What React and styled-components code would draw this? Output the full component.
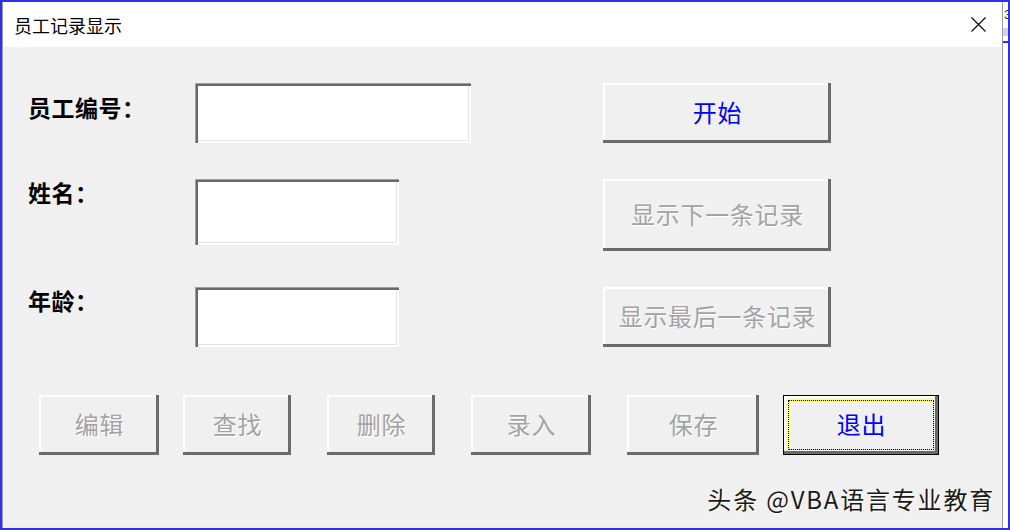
import React from "react";
import styled, { createGlobalStyle } from "styled-components";

const GlobalStyle = createGlobalStyle`
  html, body {
    margin: 0;
    padding: 0;
    background: #ffffff;
  }
`;

const CJK = `"Noto Sans CJK SC", "Liberation Sans", sans-serif`;

const Frame = styled.div`
  display: flex;
  width: 1010px;
  height: 530px;
  box-sizing: border-box;
  border: 2px solid #2f2ff2;
  overflow: hidden;
`;

const Dialog = styled.div`
  display: flex;
  flex-direction: column;
  width: 1001px;
  flex-shrink: 0;
  box-sizing: border-box;
  border-left: 1px solid #9c9c9c;
  border-right: 1px solid #9c9c9c;
`;

const TitleBar = styled.div`
  display: flex;
  align-items: center;
  height: 45px;
  flex-shrink: 0;
  background: #ffffff;
  padding-left: 11px;
`;

const Title = styled.span`
  flex: 1;
  font-family: ${CJK};
  font-size: 18px;
  color: #000;
`;

const Close = styled.svg`
  width: 15px;
  height: 15px;
  margin-right: 16px;
`;

const Body = styled.div`
  flex: 1;
  background: #f0f0f0;
  padding: 36px 0 0 25px;
`;

const Grid = styled.div`
  display: grid;
  grid-template-columns: 167px 408px 228px;
  row-gap: 36px;
`;

const Label = styled.div`
  font-family: ${CJK};
  font-weight: 700;
  font-size: 23px;
  line-height: 24px;
  letter-spacing: 0.5px;
  color: #000;
  margin-top: ${(p) => p.$top || 0}px;
`;

const TextBox = styled.input`
  display: block;
  width: ${(p) => p.$w}px;
  height: ${(p) => p.$h}px;
  box-sizing: border-box;
  border: none;
  outline: none;
  background: #ffffff;
  box-shadow: inset 1px 1px 0 #a0a0a0, inset 3px 3px 0 #696969,
    inset -2px -2px 0 #ffffff, inset -3px -3px 0 #e3e3e3;
`;

const Button = styled.button`
  position: relative;
  width: ${(p) => p.$w}px;
  height: ${(p) => p.$h || 60}px;
  margin-left: ${(p) => p.$ml || 0}px;
  padding: 0 0 3px 1px;
  box-sizing: border-box;
  background: #f0f0f0;
  border: ${(p) => (p.$default ? "1px solid #000" : "none")};
  box-shadow: inset -3px -3px 0 #6b6b6b, inset 2px 2px 0 #ffffff;
  font-family: ${CJK};
  font-size: 24px;
  line-height: 24px;
  letter-spacing: 0.7px;
  color: ${(p) => (p.$active ? "#0000ff" : "#a3a3a3")};
  text-shadow: ${(p) => (p.$active ? "none" : "1px 1px 0 #ffffff")};
  white-space: nowrap;
  cursor: default;

  &::before,
  &::after {
    content: "";
    display: ${(p) => (p.$default ? "block" : "none")};
    position: absolute;
    inset: 4px;
  }
  &::before {
    border: 1px solid #ffff00;
  }
  &::after {
    border: 1px dotted #000;
  }
`;

const ButtonRow = styled.div`
  display: flex;
  margin-top: 48px;
`;

const Footer = styled.div`
  display: flex;
  justify-content: flex-end;
  margin-top: 30px;
  padding-right: 7px;
`;

const Watermark = styled.span`
  font-family: ${CJK};
  font-size: 24px;
  line-height: 28px;
  letter-spacing: 1.8px;
  color: #1a1a1a;
  text-shadow: 1px 1px 0 #ffffff;
`;

const Strip = styled.div`
  flex: 1;
  display: flex;
  flex-direction: column;
  background: #ffffff;
`;

const StripDigit = styled.div`
  height: 26px;
  padding-left: 1px;
  font-family: "Liberation Sans", sans-serif;
  font-size: 13px;
  line-height: 26px;
  color: #333;
`;

const StripBand = styled.div`
  height: 8px;
  background: #d4d4d4;
`;

const StripLine = styled.div`
  height: 2px;
  margin-top: 5px;
  background: #2f2ff2;
`;

const rows = [
  { label: "员工编号：", top: 12, w: 276, h: 60, btn: "开始", bh: 60, active: true },
  { label: "姓名：", top: 1, w: 204, h: 66, btn: "显示下一条记录", bh: 72 },
  { label: "年龄：", top: 1, w: 204, h: 60, btn: "显示最后一条记录", bh: 60 },
];

const bottom = [
  { text: "编辑", w: 120, ml: 11 },
  { text: "查找", w: 108, ml: 24 },
  { text: "删除", w: 108, ml: 36 },
  { text: "录入", w: 120, ml: 36 },
  { text: "保存", w: 132, ml: 36 },
  { text: "退出", w: 156, ml: 24, active: true, def: true },
];

export default function App() {
  return (
    <>
      <GlobalStyle />
      <Frame>
        <Dialog>
          <TitleBar>
            <Title>员工记录显示</Title>
            <Close viewBox="0 0 15 15">
              <path d="M0.5 0.5 L14.5 14.5 M14.5 0.5 L0.5 14.5" stroke="#000" strokeWidth="1.1" fill="none" />
            </Close>
          </TitleBar>
          <Body>
            <Grid>
              {rows.map((r) => (
                <React.Fragment key={r.label}>
                  <Label $top={r.top}>{r.label}</Label>
                  <TextBox $w={r.w} $h={r.h} readOnly />
                  <Button $w={228} $h={r.bh} $active={r.active}>
                    {r.btn}
                  </Button>
                </React.Fragment>
              ))}
            </Grid>
            <ButtonRow>
              {bottom.map((b) => (
                <Button key={b.text} $w={b.w} $ml={b.ml} $active={b.active} $default={b.def}>
                  {b.text}
                </Button>
              ))}
            </ButtonRow>
            <Footer>
              <Watermark>头条 @VBA语言专业教育</Watermark>
            </Footer>
          </Body>
        </Dialog>
        <Strip>
          <StripDigit>3</StripDigit>
          <StripBand />
          <StripLine />
        </Strip>
      </Frame>
    </>
  );
}
